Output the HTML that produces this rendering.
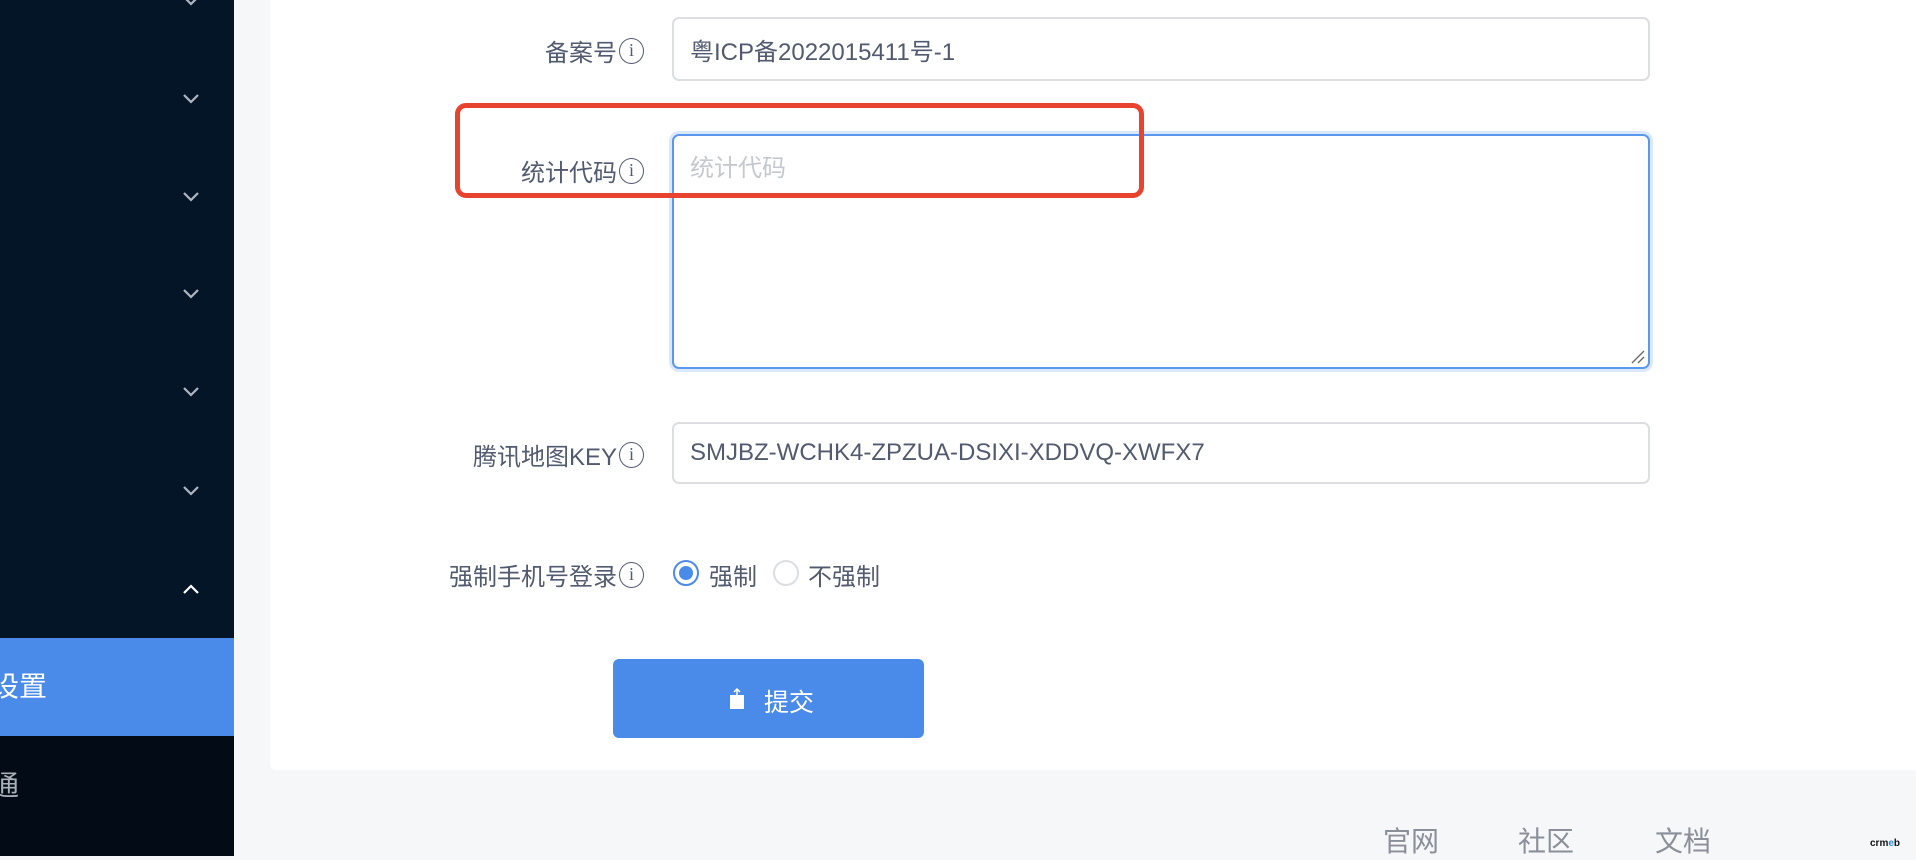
<!DOCTYPE html>
<html><head><meta charset="utf-8"><style>
*{margin:0;padding:0;box-sizing:border-box}
body{width:1916px;height:856px;overflow:hidden;background:#f5f7f9;font-family:"Liberation Sans","Noto Sans CJK SC",sans-serif;position:relative}
.side{position:absolute;left:0;top:0;width:234px;height:856px;background:#051528;overflow:hidden}
.side .bot{position:absolute;left:0;top:736px;width:234px;height:120px;background:#020b16}
.side .sel{position:absolute;left:0;top:638px;width:234px;height:98px;background:#4a8be9}
.chev{position:absolute;left:182px;width:18px;height:16px}
.card{position:absolute;left:270px;top:-10px;width:1660px;height:780px;background:#fff;border-radius:6px}
.abs{position:absolute}
.lbl{position:absolute;right:1272px;font-size:24px;color:#515a6e;white-space:nowrap;display:flex;align-items:center}
.info{display:inline-block;width:25px;height:26px;border:1.5px solid #515a6e;border-radius:50%;font-family:"Liberation Serif",serif;font-size:18px;line-height:23px;text-align:center;margin-left:2px;color:#515a6e}
.inp{position:absolute;left:672px;width:978px;border:2px solid #dcdee2;border-radius:7px;font-size:24px;color:#515a6e;padding-left:16px;display:flex;align-items:center}
</style></head><body>
<div class="side">
<div class="bot"></div>
<div class="sel"></div>
<svg class="chev" style="top:-7px" viewBox="0 0 18 16"><path d="M2 4 L9 11 L16 4" fill="none" stroke="#b0b6c0" stroke-width="2.2"/></svg>
<svg class="chev" style="top:91px" viewBox="0 0 18 16"><path d="M2 4 L9 11 L16 4" fill="none" stroke="#b0b6c0" stroke-width="2.2"/></svg>
<svg class="chev" style="top:189px" viewBox="0 0 18 16"><path d="M2 4 L9 11 L16 4" fill="none" stroke="#b0b6c0" stroke-width="2.2"/></svg>
<svg class="chev" style="top:286px" viewBox="0 0 18 16"><path d="M2 4 L9 11 L16 4" fill="none" stroke="#b0b6c0" stroke-width="2.2"/></svg>
<svg class="chev" style="top:384px" viewBox="0 0 18 16"><path d="M2 4 L9 11 L16 4" fill="none" stroke="#b0b6c0" stroke-width="2.2"/></svg>
<svg class="chev" style="top:483px" viewBox="0 0 18 16"><path d="M2 4 L9 11 L16 4" fill="none" stroke="#b0b6c0" stroke-width="2.2"/></svg>
<svg class="chev" style="top:581px" viewBox="0 0 18 16"><path d="M2 12 L9 5 L16 12" fill="none" stroke="#fff" stroke-width="2.2"/></svg>
<div class="abs" style="left:-9px;top:670px;font-size:28px;line-height:34px;color:#fff">设置</div>
<div class="abs" style="left:-9px;top:769px;font-size:28px;line-height:34px;color:#aab0b8">通</div>
</div>
<div class="card"></div>

<div class="lbl" style="top:33px">备案号<span class="info">i</span></div>
<div class="inp" style="top:17px;height:64px">粤ICP备2022015411号-1</div>

<div class="lbl" style="top:153px">统计代码<span class="info">i</span></div>
<div class="inp" style="top:134px;height:235px;border-color:#5b97ec;box-shadow:0 0 0 3px #dbe8fb;align-items:flex-start;padding-top:12px;color:#c5c8ce">统计代码
<svg class="abs" style="right:3px;bottom:3px" width="14" height="14" viewBox="0 0 14 14"><path d="M1 13 L13 1 M7 13 L13 7" stroke="#666" stroke-width="1.3"/></svg></div>

<div class="abs" style="left:455px;top:103px;width:689px;height:95px;border:5px solid #e8432e;border-radius:11px"></div>

<div class="lbl" style="top:437px">腾讯地图KEY<span class="info">i</span></div>
<div class="inp" style="top:422px;height:62px">SMJBZ-WCHK4-ZPZUA-DSIXI-XDDVQ-XWFX7</div>

<div class="lbl" style="top:557px">强制手机号登录<span class="info">i</span></div>
<div class="abs" style="left:673px;top:560px;width:26px;height:26px;border:2px solid #4a8be9;border-radius:50%"><div style="position:absolute;left:4px;top:4px;width:14px;height:14px;border-radius:50%;background:#4a8be9"></div></div>
<div class="abs" style="left:709px;top:557px;font-size:24px;color:#515a6e">强制</div>
<div class="abs" style="left:773px;top:560px;width:26px;height:26px;border:2px solid #dcdee2;border-radius:50%"></div>
<div class="abs" style="left:808px;top:557px;font-size:24px;color:#515a6e">不强制</div>

<div class="abs" style="left:613px;top:659px;width:311px;height:79px;background:#4a8be9;border-radius:6px"></div>
<svg class="abs" style="left:729px;top:688px" width="16" height="22" viewBox="0 0 16 22"><rect x="1" y="7" width="14" height="14" fill="#fff"/><path d="M8 1 L8 8 M5 4 L8 1 L11 4" stroke="#fff" stroke-width="1.5" fill="none"/></svg>
<div class="abs" style="left:764px;top:683px;font-size:25px;color:#fff">提交</div>

<div class="abs" style="left:1383px;top:820px;font-size:28px;color:#8a8f99">官网</div>
<div class="abs" style="left:1518px;top:820px;font-size:28px;color:#8a8f99">社区</div>
<div class="abs" style="left:1655px;top:820px;font-size:28px;color:#8a8f99">文档</div>
<div class="abs" style="left:1870px;top:838px;font-size:10px;font-weight:bold;color:#111">crm<span style="color:#2b8de8">e</span>b</div>
</body></html>
